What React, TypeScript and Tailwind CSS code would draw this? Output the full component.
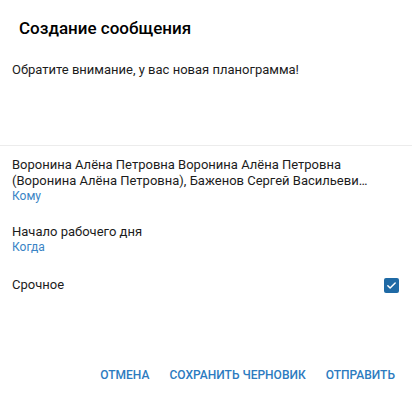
const font = { fontFamily: "Roboto, 'Noto Sans', sans-serif" };

function Field({ value, label, clamp }: { value: string; label: string; clamp?: boolean }) {
  return (
    <div className="flex flex-col pl-3 pr-10">
      <p
        className={
          clamp
            ? "line-clamp-2 text-[13px] leading-[16px] text-[#1c1c1c]"
            : "text-[13px] leading-[16px] text-[#1c1c1c]"
        }
      >
        {value}
      </p>
      <span className="text-[12px] leading-[14px] text-[#3a84c5]">{label}</span>
    </div>
  );
}

export default function App() {
  return (
    <div className="flex h-[396px] w-[412px] flex-col bg-white" style={font}>
      <h1 className="mt-[16px] pl-[19px] text-[17px] font-medium leading-[24px] text-black">
        Создание сообщения
      </h1>
      <div className="mt-[20px] h-[85px] pl-3 text-[13px] leading-[20px] text-[#1c1c1c]">
        Обратите внимание, у вас новая планограмма!
      </div>
      <div className="h-px w-full bg-[#ececec]" />

      <div className="mt-[11px]">
        <Field
          clamp
          value="Воронина Алёна Петровна Воронина Алёна Петровна (Воронина Алёна Петровна), Баженов Сергей Васильевич, Иванов Иван Иванович"
          label="Кому"
        />
      </div>
      <div className="mt-[21px]">
        <Field value="Начало рабочего дня" label="Когда" />
      </div>

      <div className="mt-[21px] flex h-[20px] items-center justify-between pl-3 pr-[13px]">
        <span className="text-[13px] leading-[20px] text-[#1c1c1c]">Срочное</span>
        <span className="flex h-[15px] w-[15px] items-center justify-center rounded-[2px] bg-[#1f6aa5]">
          <svg width="11" height="11" viewBox="0 0 24 24" fill="none">
            <path d="M4 12.5l5 5L20 6.5" stroke="white" strokeWidth="3.2" strokeLinecap="round" strokeLinejoin="round" />
          </svg>
        </span>
      </div>

      <div className="mt-[72px] flex justify-end pr-[7px]">
        {["ОТМЕНА", "СОХРАНИТЬ ЧЕРНОВИК", "ОТПРАВИТЬ"].map((t) => (
          <button
            key={t}
            className="px-[10px] text-[12px] font-medium leading-[16px] text-[#2c7bbf]"
          >
            {t}
          </button>
        ))}
      </div>
    </div>
  );
}
